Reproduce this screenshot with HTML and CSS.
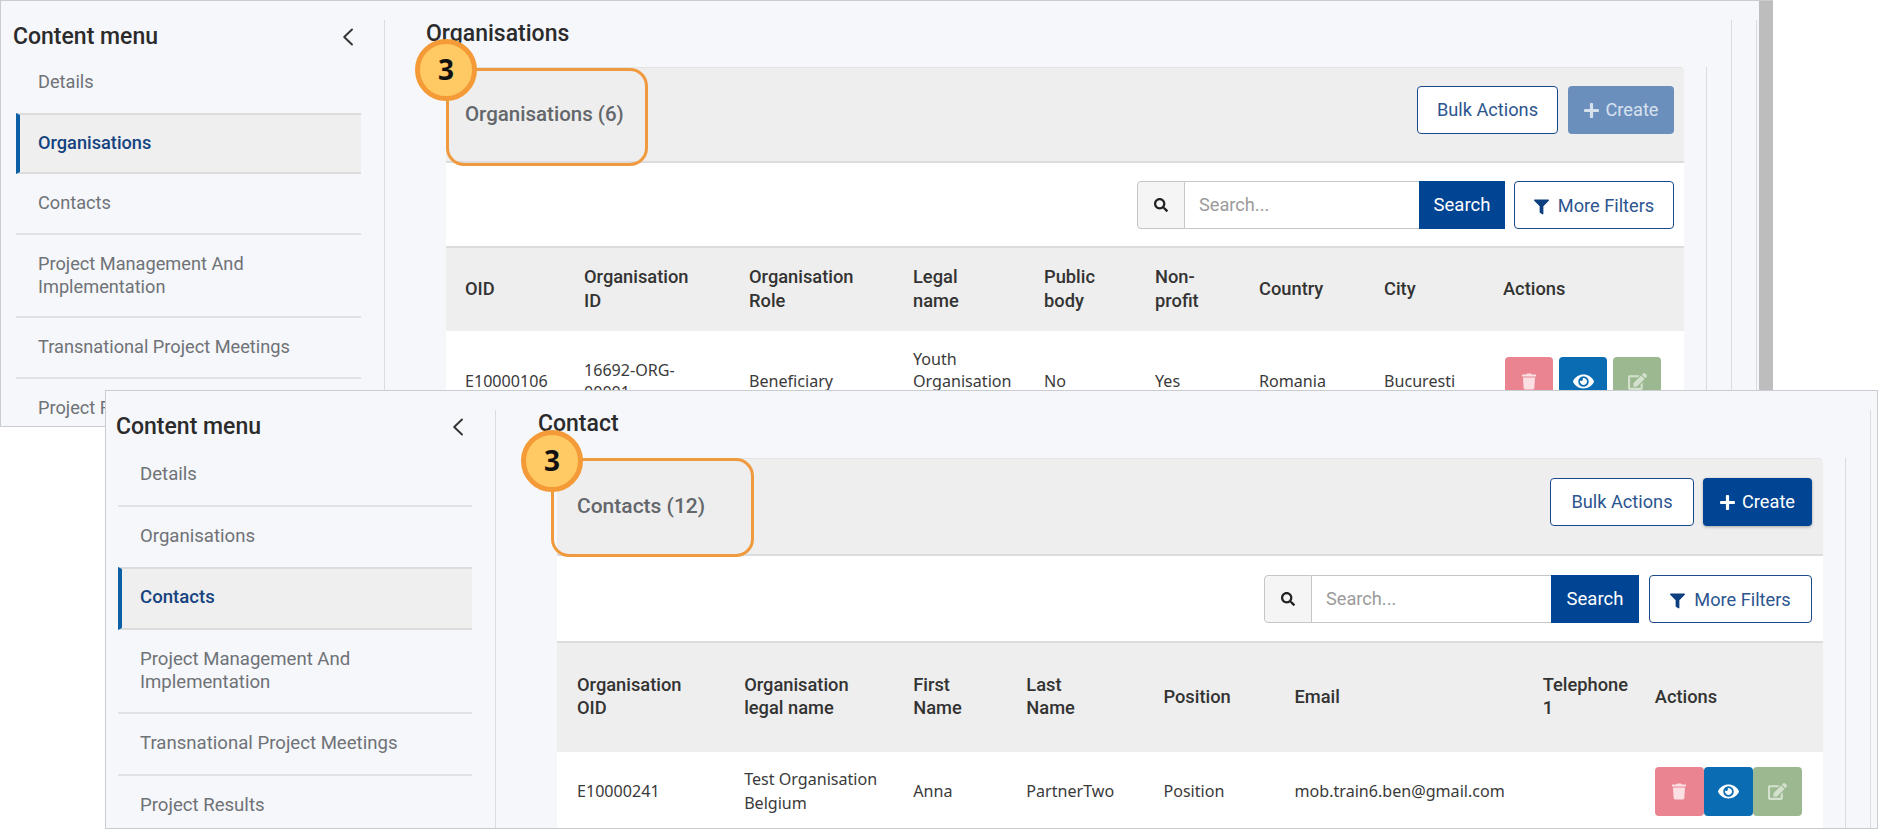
FILE: index.html
```html
<!DOCTYPE html>
<html lang="en">
<head>
<meta charset="utf-8">
<title>Organisations and Contacts</title>
<link rel="stylesheet" href="styles.css">
</head>
<body>
<svg class="defs" aria-hidden="true">
  <symbol id="i-search" viewBox="0 0 512 512"><path fill="currentColor" d="M505 442.700L405.300 343c-4.500-4.500-10.600-7-17-7H372c27.600-35.300 44-79.700 44-128C416 93.100 322.900 0 208 0S0 93.100 0 208s93.100 208 208 208c48.300 0 92.700-16.400 128-44v16.300c0 6.400 2.500 12.500 7 17l99.700 99.700c9.400 9.400 24.600 9.400 33.900 0l28.300-28.300c9.400-9.400 9.400-24.600.1-34zM208 336c-70.700 0-128-57.200-128-128 0-70.700 57.200-128 128-128 70.700 0 128 57.200 128 128 0 70.700-57.200 128-128 128z"/></symbol>
  <symbol id="i-plus" viewBox="0 0 448 512"><path fill="currentColor" d="M416 208H272V64c0-17.700-14.300-32-32-32h-32c-17.700 0-32 14.300-32 32v144H32c-17.700 0-32 14.300-32 32v32c0 17.700 14.300 32 32 32h144v144c0 17.700 14.300 32 32 32h32c17.700 0 32-14.300 32-32V304h144c17.700 0 32-14.300 32-32v-32c0-17.700-14.300-32-32-32z"/></symbol>
  <symbol id="i-filter" viewBox="0 0 512 512"><path fill="currentColor" d="M487 0H25C2.800 0-8.400 27 7.400 42.700L192 227.300V432c0 7.800 3.800 15.100 10.200 19.700l80 56C298 518.700 320 507.500 320 488V227.300L504.600 42.700C520.300 27 509.200 0 487 0z"/></symbol>
  <symbol id="i-trash" viewBox="0 0 448 512"><path fill="currentColor" d="M432 32H312l-9.400-18.700A24 24 0 0 0 281.100 0H166.800a23.700 23.700 0 0 0-21.400 13.300L136 32H16A16 16 0 0 0 0 48v32a16 16 0 0 0 16 16h416a16 16 0 0 0 16-16V48a16 16 0 0 0-16-16zM53.200 467a48 48 0 0 0 47.900 45h245.800a48 48 0 0 0 47.900-45L416 128H32z"/></symbol>
  <symbol id="i-eye" viewBox="0 0 576 512"><path fill="currentColor" d="M572.500 241.400C518.300 135.600 410.900 64 288 64S57.700 135.600 3.500 241.400a32.400 32.400 0 0 0 0 29.200C57.700 376.400 165.100 448 288 448s230.300-71.600 284.500-177.400a32.400 32.400 0 0 0 0-29.200zM288 400a144 144 0 1 1 144-144 143.900 143.900 0 0 1-144 144zm0-240a95.300 95.300 0 0 0-25.300 3.800 47.900 47.900 0 0 1-66.900 66.900A95.800 95.800 0 1 0 288 160z"/></symbol>
  <symbol id="i-edit" viewBox="0 0 576 512"><path fill="currentColor" d="M402.600 83.200l90.200 90.200c3.800 3.800 3.800 10 0 13.800L274.400 405.600l-92.800 10.300c-12.400 1.400-22.900-9.100-21.500-21.500l10.300-92.800L388.800 83.200c3.800-3.800 10-3.800 13.800 0zm162-22.900l-48.800-48.800c-15.200-15.200-39.900-15.200-55.200 0l-35.400 35.400c-3.800 3.800-3.800 10 0 13.800l90.200 90.200c3.800 3.800 10 3.800 13.800 0l35.400-35.400c15.200-15.300 15.200-40 0-55.200zM384 346.200V448H64V128h229.800c3.200 0 6.200-1.300 8.500-3.500l40-40c7.600-7.600 2.200-20.500-8.500-20.500H48C21.500 64 0 85.500 0 112v352c0 26.500 21.500 48 48 48h352c26.500 0 48-21.500 48-48V306.200c0-10.700-12.900-16-20.500-8.500l-40 40c-2.200 2.300-3.500 5.300-3.500 8.500z"/></symbol>
  <symbol id="i-chev" viewBox="0 0 12 18"><path fill="none" stroke="currentColor" stroke-width="1.900" stroke-linecap="round" stroke-linejoin="round" d="M10 1.500 2.200 9 10 16.500"/></symbol>
</svg>

<section class="window win-a">
  <aside class="sidebar">
    <div class="side-head">
      <h2 class="side-title">Content menu</h2>
      <svg class="chev"><use href="#i-chev"/></svg>
    </div>
    <ul class="menu">
      <li class="item no-line">Details</li>
      <li class="item active">Organisations</li>
      <li class="item">Contacts</li>
      <li class="item">Project Management And Implementation</li>
      <li class="item">Transnational Project Meetings</li>
      <li class="item item-cut">Project Results</li>
    </ul>
  </aside>
  <div class="rail-outer">
    <div class="rail-inner">
      <h1 class="page-title">Organisations</h1>
      <div class="card-rail">
        <div class="card">
          <div class="note-box"></div>
          <div class="badge">3</div>
          <div class="card-head">
            <span class="card-title">Organisations (6)</span>
            <div class="head-btns">
              <button class="btn btn-outline btn-bulk">Bulk Actions</button>
              <button class="btn btn-primary btn-off btn-create"><svg class="ic-plus"><use href="#i-plus"/></svg>Create</button>
            </div>
          </div>
          <div class="toolbar">
            <div class="addon"><svg class="ic-search"><use href="#i-search"/></svg></div>
            <div class="search-input">Search...</div>
            <button class="btn-search">Search</button>
            <button class="btn btn-outline btn-filter"><svg class="ic-filter"><use href="#i-filter"/></svg>More Filters</button>
          </div>
          <table class="grid">
            <colgroup><col class="a1"><col class="a2"><col class="a3"><col class="a4"><col class="a5"><col class="a6"><col class="a7"><col class="a8"><col class="a9"></colgroup>
            <thead>
              <tr><th>OID</th><th>Organisation<br>ID</th><th>Organisation<br>Role</th><th>Legal<br>name</th><th>Public<br>body</th><th>Non-<br>profit</th><th>Country</th><th>City</th><th>Actions</th></tr>
            </thead>
            <tbody>
              <tr>
                <td>E10000106</td><td>16692-ORG-<br>00001</td><td>Beneficiary</td><td>Youth Organisation Romania</td><td>No</td><td>Yes</td><td>Romania</td><td>Bucuresti</td>
                <td><div class="acts">
                  <span class="act act-del"><svg class="ic-trash"><use href="#i-trash"/></svg></span>
                  <span class="act act-view"><svg class="ic-eye"><use href="#i-eye"/></svg></span>
                  <span class="act act-edit"><svg class="ic-edit"><use href="#i-edit"/></svg></span>
                </div></td>
              </tr>
            </tbody>
          </table>
        </div>
      </div>
    </div>
  </div>
  <div class="scrollbar"></div>
</section>

<section class="window win-b">
  <aside class="sidebar">
    <div class="side-head">
      <h2 class="side-title">Content menu</h2>
      <svg class="chev"><use href="#i-chev"/></svg>
    </div>
    <ul class="menu">
      <li class="item">Details</li>
      <li class="item no-line">Organisations</li>
      <li class="item active">Contacts</li>
      <li class="item">Project Management And Implementation</li>
      <li class="item">Transnational Project Meetings</li>
      <li class="item">Project Results</li>
    </ul>
  </aside>
  <div class="rail-outer">
    <div class="rail-inner">
      <h1 class="page-title">Contact</h1>
      <div class="card-rail">
        <div class="card">
          <div class="note-box"></div>
          <div class="badge">3</div>
          <div class="card-head">
            <span class="card-title">Contacts (12)</span>
            <div class="head-btns">
              <button class="btn btn-outline btn-bulk">Bulk Actions</button>
              <button class="btn btn-primary btn-create"><svg class="ic-plus"><use href="#i-plus"/></svg>Create</button>
            </div>
          </div>
          <div class="toolbar">
            <div class="addon"><svg class="ic-search"><use href="#i-search"/></svg></div>
            <div class="search-input">Search...</div>
            <button class="btn-search">Search</button>
            <button class="btn btn-outline btn-filter"><svg class="ic-filter"><use href="#i-filter"/></svg>More Filters</button>
          </div>
          <table class="grid">
            <colgroup><col class="b1"><col class="b2"><col class="b3"><col class="b4"><col class="b5"><col class="b6"><col class="b7"><col class="b8"></colgroup>
            <thead>
              <tr><th>Organisation<br>OID</th><th>Organisation<br>legal name</th><th>First<br>Name</th><th>Last<br>Name</th><th>Position</th><th>Email</th><th>Telephone<br>1</th><th>Actions</th></tr>
            </thead>
            <tbody>
              <tr>
                <td>E10000241</td><td>Test Organisation Belgium</td><td>Anna</td><td>PartnerTwo</td><td>Position</td><td>mob.train6.ben@gmail.com</td><td></td>
                <td><div class="acts">
                  <span class="act act-del"><svg class="ic-trash"><use href="#i-trash"/></svg></span>
                  <span class="act act-view"><svg class="ic-eye"><use href="#i-eye"/></svg></span>
                  <span class="act act-edit"><svg class="ic-edit"><use href="#i-edit"/></svg></span>
                </div></td>
              </tr>
            </tbody>
          </table>
        </div>
      </div>
    </div>
  </div>
</section>
</body>
</html>
```

FILE: styles.css
```css
* { box-sizing: border-box; }
html, body { margin: 0; padding: 0; }
body {
  position: relative;
  width: 1878px;
  height: 829px;
  overflow: hidden;
  background: #fff;
  font-family: Roboto, "Liberation Sans", sans-serif;
}
.defs { position: absolute; width: 0; height: 0; }

/* windows on the canvas */
.window {
  position: absolute;
  display: flex;
  overflow: hidden;
  background: #f5f7fb;
  border: 1px solid #c9cdd2;
}
.win-a { left: 0; top: 0; width: 1773px; height: 427px; border-right: 0; }
.win-b { left: 105px; top: 390px; width: 1773px; height: 439px; }
.scrollbar { flex: none; width: 14px; background: #bdbdbd; margin-top: -1px; }

/* sidebar */
.sidebar {
  flex: none;
  margin-top: 19px;
  border-right: 1px solid #d9dce1;
  align-self: stretch;
}
.win-a .sidebar { width: 384px; }
.win-b .sidebar { width: 390px; }
.side-head { display: flex; align-items: center; justify-content: space-between; height: 33px; }
.win-a .side-head { padding: 0 30px 0 12px; }
.win-b .side-head { padding: 0 31px 0 10px; }
.side-title { margin: 0; font-size: 23px; font-weight: 500; line-height: 33px; color: #2b2b2b; }
.chev { width: 12px; height: 18px; color: #333; }
.menu { list-style: none; margin: 0; padding: 0; }
.win-a .menu { margin: 0 23px 0 15px; }
.win-b .menu { margin: 2px 23px 0 12px; }
.item {
  display: flex;
  align-items: center;
  min-height: 61px;
  padding: 16.500px 20px 18.500px 22px;
  border-bottom: 2px solid #dfe1e4;
  font-size: 18.200px;
  line-height: 23px;
  color: #6f7276;
}
.win-b .item { min-height: 62px; padding-top: 17.500px; padding-bottom: 18.500px; font-size: 18.600px; }
.item.no-line { border-bottom-color: transparent; }
.item.active {
  margin-top: -1px;
  padding-top: 16px;
  padding-bottom: 18px;
  border-top: 2px solid #dcdcdc;
  border-bottom: 2px solid #dcdcdc;
  border-left: 4px solid #0b5fa5;
  padding-left: 18px;
  background: #efefef;
  font-weight: 500;
  color: #15437f;
}
.win-b .item.active { margin-top: -2px; padding-top: 17px; padding-bottom: 19px; }
.item-cut { width: 90px; padding-right: 0; overflow: hidden; white-space: nowrap; }

/* main rails */
.rail-outer {
  flex: 1;
  min-width: 0;
  margin-top: 19px;
}
.win-a .rail-outer { margin-right: 2px; padding: 0 24px 0 41px; border-right: 1px solid #d9dce1; }
.win-b .rail-outer { padding: 0 6px 0 42px; }
.rail-inner { height: 100%; border-right: 1px solid #d9dce1; padding-right: 24px; }
.page-title { margin: 0; font-size: 23px; font-weight: 500; line-height: 28px; color: #2b2b2b; }
.card-rail { margin-top: 19px; height: 100%; border-right: 1px solid #d9dce1; padding-right: 22px; margin-left: 20px; }
.win-b .card-rail { margin-left: 19px; margin-top: 20px; }

/* card */
.card { position: relative; background: #fff; }
.card-head {
  display: flex;
  align-items: center;
  justify-content: space-between;
  height: 96px;
  padding: 0 10px 9px 19px;
  background: #eee;
  border-top: 1px solid #e3e3e3;
  border-bottom: 2px solid #dcdcdc;
  border-top-right-radius: 4px;
}
.win-b .card-head { height: 98px; padding: 0 11px 10px 20px; }
.card-title { font-size: 20.500px; font-weight: 500; color: #63666a; position: relative; top: 4px; }
.win-b .card-title { font-size: 21px; }
.head-btns { display: flex; gap: 10px; }
.win-b .head-btns { gap: 9px; }

.btn {
  display: inline-flex;
  align-items: center;
  justify-content: center;
  height: 48px;
  padding-bottom: 2px;
  border-radius: 4px;
  font-family: inherit;
  font-size: 18.200px;
  cursor: pointer;
}
.btn-outline { background: #fff; border: 1.500px solid #1a4a8c; color: #2c558f; }
.btn-primary { background: #004494; border: 0; color: #fff; box-shadow: 0 1px 3px rgba(0,0,0,.3); }
.btn-off { background: #6b8fbd; color: #d7e1ee; box-shadow: none; }
.btn-bulk { width: 141px; }
.btn-create { width: 106px; gap: 7px; }
.win-b .btn-bulk { width: 144px; }
.win-b .btn-create { width: 109px; }
.ic-plus { width: 15px; height: 17px; margin-top: 2px; }

.toolbar {
  display: flex;
  justify-content: flex-end;
  align-items: center;
  height: 85px;
  padding: 0 10px;
  border-bottom: 2px solid #dcdcdc;
}
.win-b .toolbar { height: 87px; padding-right: 11px; }
.addon {
  display: flex;
  align-items: center;
  justify-content: center;
  width: 48px;
  height: 48px;
  background: #f5f5f5;
  border: 1.500px solid #c6c6c6;
  border-radius: 4px 0 0 4px;
  color: #222;
}
.ic-search { width: 14px; height: 14px; }
.search-input {
  display: flex;
  align-items: center;
  width: 234px;
  height: 48px;
  padding-left: 14px;
  border: 1.500px solid #c6c6c6;
  border-left: 0;
  border-right: 0;
  font-size: 18.200px;
  color: #9b9b9b;
}
.win-b .search-input { width: 239px; }
.btn-search {
  width: 86px;
  height: 48px;
  border: 0;
  background: #004494;
  color: #fff;
  font-family: inherit;
  font-size: 18.500px;
}
.win-b .btn-search { width: 88px; }
.btn-filter { width: 160px; gap: 9px; margin-left: 9px; padding-bottom: 0; }
.win-b .btn-filter { width: 163px; margin-left: 10px; }
.ic-filter { width: 15px; height: 16px; color: #0d3f80; margin-top: 3px; }

/* tables */
.grid { width: 100%; table-layout: fixed; border-collapse: collapse; }
.grid th {
  height: 83px;
  padding: 0 4px 2px 19px;
  background: #eee;
  text-align: left;
  vertical-align: middle;
  font-size: 18.300px;
  font-weight: 500;
  line-height: 23.500px;
  color: #333;
}
.win-b .grid th { height: 109px; padding-bottom: 3px; line-height: 23px; }
.grid td {
  height: 100px;
  padding: 0 8px 0 19px;
  vertical-align: middle;
  font-family: "Noto Sans", "Open Sans", sans-serif;
  font-size: 16.100px;
  line-height: 22px;
  color: #3a3a3a;
}
.win-b .grid td { height: 79px; padding-bottom: 1px; line-height: 24px; }
.win-b .grid th:first-child, .win-b .grid td:first-child { padding-left: 20px; }
.a1 { width: 119px; } .a2 { width: 165px; } .a3 { width: 164px; } .a4 { width: 131px; }
.a5 { width: 111px; } .a6 { width: 104px; } .a7 { width: 125px; } .a8 { width: 119px; } .a9 { width: 200px; }
.b1 { width: 168px; } .b2 { width: 169px; } .b3 { width: 113px; } .b4 { width: 137px; }
.b5 { width: 131px; } .b6 { width: 248px; } .b7 { width: 112px; } .b8 { width: 187px; }

.acts { display: flex; gap: 6px; margin-left: 2px; }
.win-b .acts { gap: 0; margin-left: 0; }
.act {
  display: flex;
  align-items: center;
  justify-content: center;
  width: 48px;
  height: 49px;
  border-radius: 4px;
}
.win-b .act { width: 49px; }
.act-del { background: #e98490; color: #fbdfe3; }
.act-view { background: #0a6db3; color: #fff; }
.act-edit { background: #9cb891; color: #d3e1cd; }
.ic-trash { width: 14px; height: 17px; }
.ic-eye { width: 21px; height: 19px; }
.ic-edit { width: 19px; height: 17px; }

/* annotations laid over the card */
.note-box {
  position: absolute;
  left: 0;
  top: 1px;
  width: 202px;
  height: 98px;
  border: 3.500px solid #f09a40;
  border-radius: 18px;
  z-index: 2;
}
.win-b .note-box { left: -6px; top: 0; width: 203px; height: 99px; }
.badge {
  position: absolute;
  left: -31px;
  top: -28px;
  width: 62px;
  height: 62px;
  display: flex;
  align-items: center;
  justify-content: center;
  padding-bottom: 3px;
  background: #ffc964;
  border: 5px solid #f49b37;
  border-radius: 50%;
  font-family: "Open Sans", "Noto Sans", sans-serif;
  font-size: 28px;
  font-weight: 700;
  color: #111;
  z-index: 3;
}
.win-b .badge { left: -36px; top: -28px; }
```
